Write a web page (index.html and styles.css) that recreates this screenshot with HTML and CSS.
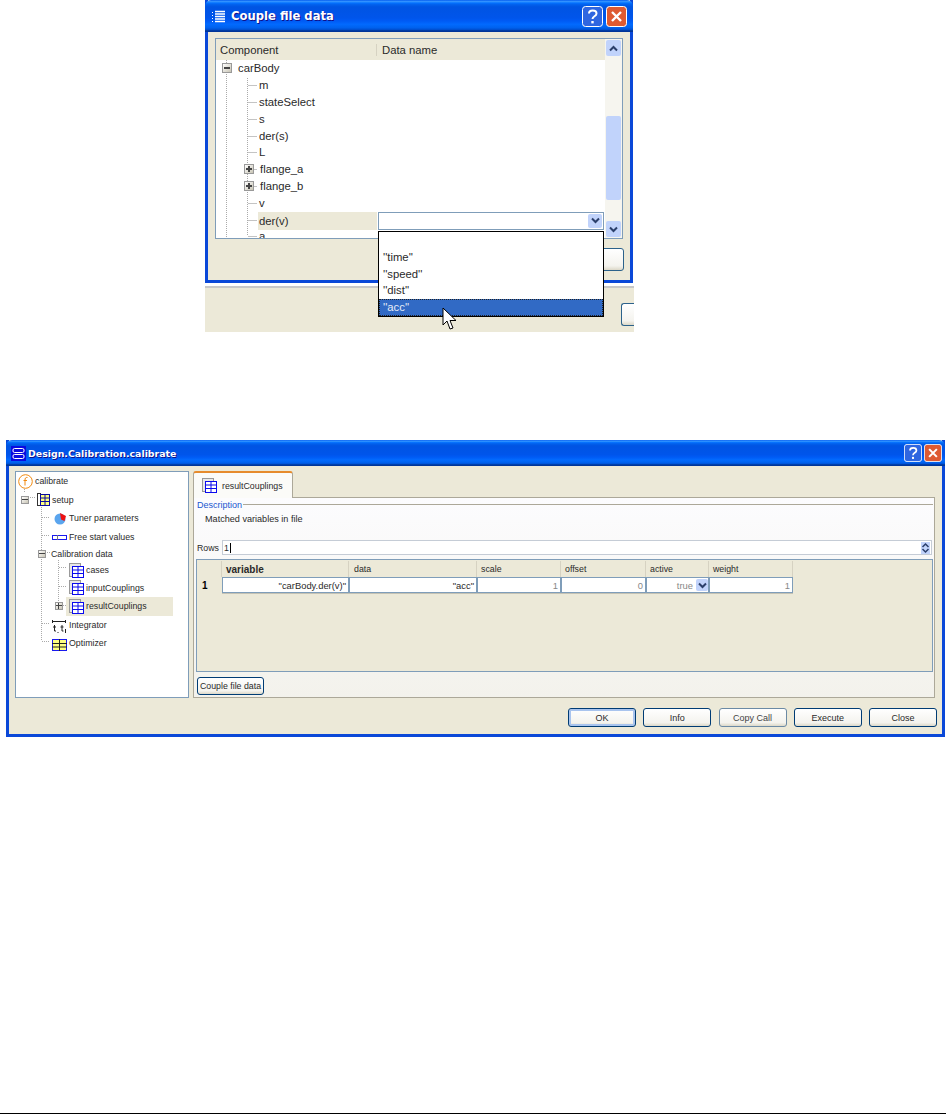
FILE: index.html
```html
<!DOCTYPE html>
<html lang="en">
<head>
    <meta charset="UTF-8">
    <title>Couple file data</title>
    <link rel="stylesheet" href="styles.css">
</head>
<body>
<svg class="defs" width="0" height="0">
    <symbol id="gridIcon" viewBox="0 0 15 15">
        <rect x="0.5" y="0.5" width="11" height="13" fill="#e8e8e8" stroke="#999"/>
        <rect x="3" y="3" width="11.5" height="11.5" fill="#fff"/>
        <path d="M3 3.5H15M3 7H15M3 10.5H15M3 14.5H15M3.5 3V15M9 3V15M14.5 3V15" stroke="#0a0aee" fill="none"/>
    </symbol>
    <symbol id="closeIcon" viewBox="0 0 21 21">
        <rect x="0.5" y="0.5" width="20" height="20" rx="3" fill="#de5a32" stroke="#fff"/>
        <path d="M6 6L15 15M15 6L6 15" stroke="#fff" stroke-width="2.4"/>
    </symbol>
    <symbol id="helpIcon" viewBox="0 0 21 21">
        <rect x="0.5" y="0.5" width="20" height="20" rx="3" fill="#2f66e0" stroke="#fff"/>
        <path d="M7 7.5C7 3.5 14.5 3.5 14.5 7.5C14.5 10.5 10.5 10 10.5 13" stroke="#fff" stroke-width="2" fill="none"/>
        <rect x="9.3" y="15" width="2.4" height="2.4" fill="#fff"/>
    </symbol>
    <symbol id="arrowDown" viewBox="0 0 9 7">
        <path d="M1 1.5L4.5 5L8 1.5" stroke="#2b3f6b" stroke-width="2" fill="none"/>
    </symbol>
</svg>

<!-- Top screenshot -->
<section class="shot">
    <div class="win win-small">
        <div class="titlebar titlebar-small">
            <svg class="title-icon" width="13" height="13" viewBox="0 0 13 13">
                <path d="M0 2.5H1M0 5.5H1M0 8.5H1M0 11.5H1" stroke="#fff"/>
                <path d="M3 1.5H13M3 4H13M3 6.5H13M3 9H13M3 11.5H13" stroke="#fff" stroke-width="1.3"/>
            </svg>
            <span class="title">Couple file data</span>
            <svg class="cap-btn" width="21" height="21"><use href="#helpIcon"/></svg>
            <svg class="cap-btn" width="21" height="21"><use href="#closeIcon"/></svg>
        </div>
        <div class="win-small-body">
            <div class="couple-panel">
                <div class="couple-list">
                    <div class="couple-head">
                        <span class="col-comp">Component</span>
                        <span class="col-data">Data name</span>
                    </div>
                    <svg class="guides" width="60" height="180" viewBox="0 0 60 180">
                        <path d="M10.5 0V180M31.5 18V176" stroke="#aaa" stroke-dasharray="1 1" fill="none"/>
                        <path d="M32 25.5H41M32 42.5H41M32 59.5H41M32 76.5H41M32 92.5H41M37 109.5H41M37 126.5H41M32 143.5H41M32 160.5H41M32 176.5H41" stroke="#c4c4c4" fill="none"/>
                    </svg>
                    <div class="c-row c-root"><span class="exp minus"></span>carBody</div>
                    <div class="c-row">m</div>
                    <div class="c-row">stateSelect</div>
                    <div class="c-row">s</div>
                    <div class="c-row">der(s)</div>
                    <div class="c-row">L</div>
                    <div class="c-row c-node"><span class="exp plus"></span>flange_a</div>
                    <div class="c-row c-node"><span class="exp plus"></span>flange_b</div>
                    <div class="c-row">v</div>
                    <div class="c-row c-selected">
                        <span class="c-sel">der(v)</span>
                        <div class="combo">
                            <span class="combo-btn"><svg width="9" height="7"><use href="#arrowDown"/></svg></span>
                        </div>
                    </div>
                    <div class="c-row">a</div>
                </div>
                <div class="vscroll">
                    <span class="sb-btn"><svg class="flip" width="9" height="7"><use href="#arrowDown"/></svg></span>
                    <span class="sb-thumb"></span>
                    <span class="sb-btn"><svg width="9" height="7"><use href="#arrowDown"/></svg></span>
                </div>
            </div>
            <div class="small-actions"><span class="xp-btn small-action"></span></div>
        </div>
    </div>
    <div class="strip"><span class="xp-btn strip-btn"></span></div>

    <ul class="droplist">
        <li></li>
        <li>''time''</li>
        <li>''speed''</li>
        <li>''dist''</li>
        <li class="picked">''acc''</li>
    </ul>
    <svg class="cursor" width="15" height="24" viewBox="0 0 15 24">
        <path d="M1 1V18L5 14L8 22L11 21L8 13.5H14Z" fill="#fff" stroke="#000"/>
    </svg>
</section>

<!-- Calibrate dialog -->
<section class="win win-large">
    <div class="titlebar titlebar-large">
        <svg class="title-icon" width="15" height="15" viewBox="0 0 15 15">
            <rect width="15" height="15" fill="#0a0ae0"/>
            <rect x="2" y="2.5" width="11" height="4" rx="1.5" fill="none" stroke="#fff"/>
            <rect x="2" y="8.5" width="11" height="4" rx="1.5" fill="none" stroke="#fff"/>
        </svg>
        <span class="title">Design.Calibration.calibrate</span>
        <svg class="cap-btn" width="18" height="18"><use href="#helpIcon"/></svg>
        <svg class="cap-btn" width="18" height="18"><use href="#closeIcon"/></svg>
    </div>
    <div class="dlg-body">
        <div class="dlg-main">
            <div class="tree">
                <svg class="guides" width="70" height="180" viewBox="0 0 70 180">
                    <path d="M8.5 17V21M25.5 33V169M42.5 88V133" stroke="#aaa" stroke-dasharray="1 1" fill="none"/>
                    <path d="M14 25.5H20M26 45.5H34M26 63.5H34M31 80.5H34M43 95.5H50M43 114.5H50M47 133.5H50M26 151.5H34M26 169.5H34" stroke="#aaa" stroke-dasharray="1 1" fill="none"/>
                </svg>
                <div class="t-row t-func">
                    <svg class="ico" width="15" height="15" viewBox="0 0 15 15">
                        <circle cx="7.5" cy="7.5" r="6.8" fill="#fff" stroke="#f08a10"/>
                        <path d="M9.5 3.5C7.5 3 7 4.5 7 6V11.5M5.5 6.5H9" stroke="#f08a10" fill="none"/>
                    </svg>calibrate
                </div>
                <div class="t-row t-setup">
                    <span class="exp exp-sm minus"></span>
                    <svg class="ico" width="13" height="13" viewBox="0 0 13 13">
                        <rect x="0.5" y="0.5" width="3" height="12" fill="none" stroke="#333"/>
                        <rect x="3" y="1" width="9.5" height="11.5" fill="#ffff80"/>
                        <path d="M3 1.5H13M3 5H13M3 8.5H13M3 12.5H13M3.5 1V13M8 1V13M12.5 1V13" stroke="#0a0aa0" fill="none"/>
                    </svg>setup
                </div>
                <div class="t-row t-tuner">
                    <svg class="ico" width="13" height="13" viewBox="0 0 13 13">
                        <circle cx="6" cy="7" r="5.5" fill="#5aa5ee"/>
                        <path d="M6 1L12 4L10.5 9L7 7.5Z" fill="#ee1111"/>
                    </svg>Tuner parameters
                </div>
                <div class="t-row t-free">
                    <svg class="ico" width="15" height="7" viewBox="0 0 15 7">
                        <rect x="0.5" y="1.5" width="14" height="4" fill="#fff" stroke="#1a1aee"/>
                        <path d="M5.5 1V6" stroke="#777"/>
                    </svg>Free start values
                </div>
                <div class="t-row t-calib t-short"><span class="exp exp-sm minus"></span>Calibration data</div>
                <div class="t-row t-item t-short"><svg class="ico" width="15" height="15"><use href="#gridIcon"/></svg>cases</div>
                <div class="t-row t-item"><svg class="ico" width="15" height="15"><use href="#gridIcon"/></svg>inputCouplings</div>
                <div class="t-row t-result">
                    <span class="exp exp-sm plus"></span>
                    <div class="t-sel"><svg class="ico" width="15" height="15"><use href="#gridIcon"/></svg>resultCouplings</div>
                </div>
                <div class="t-row t-free">
                    <svg class="ico ico-low ico-wide" width="14" height="13" viewBox="0 0 14 13">
                        <path d="M0.5 0V3M13.5 0V3M0 1.5H14" stroke="#222" fill="none"/>
                        <path d="M2.5 5V11H4M1 7H4M10 5V11H11.5M8.5 7H11.5M13.5 9V13M6 12V13" stroke="#222" fill="none"/>
                    </svg>Integrator
                </div>
                <div class="t-row t-free">
                    <svg class="ico ico-low" width="15" height="12" viewBox="0 0 15 12">
                        <rect x="0.5" y="0.5" width="14" height="11" fill="#ffff80" stroke="#1a1aee"/>
                        <path d="M0 4.5H15M7.5 0V12" stroke="#222"/>
                        <path d="M0 8H15" stroke="#222"/>
                    </svg>Optimizer
                </div>
            </div>
            <div class="pane">
                <div class="tabs">
                    <div class="tab"><svg class="ico" width="15" height="15"><use href="#gridIcon"/></svg>resultCouplings</div>
                </div>
                <div class="tab-body">
                    <div class="desc">
                        <div class="legend"><span>Description</span><i></i></div>
                        <div class="desc-text">Matched variables in file</div>
                    </div>
                    <div class="rows-line">
                        <label>Rows</label>
                        <div class="rows-input">
                            <span>1</span>
                            <svg class="spin" width="9" height="12" viewBox="0 0 9 12">
                                <rect width="9" height="12" fill="#c1d3fb"/>
                                <path d="M1.5 5L4.5 2L7.5 5M1.5 7L4.5 10L7.5 7" stroke="#2b3f6b" stroke-width="1.5" fill="none"/>
                            </svg>
                        </div>
                    </div>
                    <div class="grid-box">
                        <div class="data-grid">
                            <div class="gh"></div>
                            <div class="gh gh-main">variable</div>
                            <div class="gh gh-data">data</div>
                            <div class="gh">scale</div>
                            <div class="gh">offset</div>
                            <div class="gh">active</div>
                            <div class="gh">weight</div>
                            <div class="g-rowhead">1</div>
                            <div class="cell">"carBody.der(v)"</div>
                            <div class="cell">"acc"</div>
                            <div class="cell cell-off">1</div>
                            <div class="cell cell-off">0</div>
                            <div class="cell cell-off cell-combo">true<span class="combo-btn"><svg width="9" height="7"><use href="#arrowDown"/></svg></span></div>
                            <div class="cell cell-off">1</div>
                        </div>
                    </div>
                    <button class="xp-btn couple-btn">Couple file data</button>
                </div>
            </div>
        </div>
        <div class="dlg-actions">
            <button class="xp-btn act act-default">OK</button>
            <button class="xp-btn act">Info</button>
            <button class="xp-btn act act-off">Copy Call</button>
            <button class="xp-btn act">Execute</button>
            <button class="xp-btn act">Close</button>
        </div>
    </div>
</section>

<footer class="page-rule"></footer>
</body>
</html>
```

FILE: styles.css
```css
html, body {
    margin: 0;
    padding: 0;
}

body {
    display: flex;
    flex-direction: column;
    height: 1114px;
    overflow: hidden;
    background-color: #fff;
    font-family: "Liberation Sans", Arial, sans-serif;
    font-size: 9px;
    color: #2a2a2a;
}

.defs {
    position: absolute;
}

.page-rule {
    margin-top: auto;
    height: 1px;
    background-color: #000;
}

/* Window chrome */
.win {
    box-sizing: border-box;
    background-color: #ece9d8;
    border: 3px solid #0a48d8;
    border-top: none;
}

.titlebar {
    display: flex;
    align-items: center;
    margin: 0 -3px;
    background: linear-gradient(#0058ee, #3593ff 4%, #288eff 6%, #127dff 8%, #036ffc 10%, #0262ee 14%, #0057e5 20%, #0054e3 24%, #0055eb 56%, #005bf5 66%, #026afe 76%, #0062ef 86%, #0052d6 92%, #0040ab 94%, #003092 100%);
    border-radius: 6px 6px 0 0;
}

.title {
    flex: 1;
    font-family: "DejaVu Sans", Verdana, sans-serif;
    font-weight: bold;
    color: #fff;
    text-shadow: 1px 1px #0f1089;
}

.cap-btn {
    display: block;
}

.xp-btn {
    box-sizing: border-box;
    display: block;
    padding: 0;
    background: linear-gradient(#fff, #f4f3ee 80%, #dcd8c8);
    border: 1px solid #003c74;
    border-radius: 3px;
    font-family: inherit;
    font-size: 9px;
    color: #2a2a2a;
}

/* Top screenshot */
.shot {
    position: relative;
    flex: none;
    width: 429px;
    height: 332px;
    margin-left: 205px;
    margin-bottom: 108px;
}

.win-small {
    width: 428px;
    height: 283px;
}

.titlebar-small {
    height: 32px;
    padding: 0 6px 0 7px;
    gap: 3px;
}

.titlebar-small .title {
    padding-left: 3px;
    font-size: 11.6px;
}

.win-small-body {
    padding: 6px 7px 0 7px;
}

.couple-panel {
    display: flex;
    height: 201px;
    box-sizing: border-box;
    background-color: #fff;
    border: 1px solid #7f9db9;
    overflow: hidden;
}

.couple-list {
    position: relative;
    flex: 1;
    font-size: 11.3px;
}

.couple-head {
    display: flex;
    align-items: center;
    height: 21px;
    background-color: #ece9d8;
}

.col-comp {
    box-sizing: border-box;
    width: 161px;
    padding-left: 4px;
    border-right: 1px solid #d6d2c2;
}

.col-data {
    padding-left: 5px;
}

.couple-list .guides {
    position: absolute;
    left: 0;
    top: 21px;
}

.c-row {
    position: relative;
    display: flex;
    align-items: center;
    height: 16.8px;
    padding-left: 43px;
}

.c-root {
    padding-left: 6px;
}

.c-root .exp {
    margin-right: 6px;
}

.c-node {
    padding-left: 28px;
}

.c-node .exp {
    margin-right: 6px;
}

.c-selected {
    padding-left: 42px;
}

.c-sel {
    box-sizing: border-box;
    display: flex;
    align-items: center;
    width: 119px;
    height: 18px;
    margin-top: 2px;
    padding-left: 1px;
    background-color: #ece9d8;
}

.combo {
    box-sizing: border-box;
    display: flex;
    align-items: center;
    justify-content: flex-end;
    width: 226px;
    height: 18px;
    margin-top: 2px;
    margin-left: 1px;
    padding-right: 1px;
    background-color: #fff;
    border: 1px solid #7f9db9;
}

.combo-btn {
    display: flex;
    align-items: center;
    justify-content: center;
    width: 14px;
    height: 14px;
    background-color: #c1d3fb;
    border-radius: 2px;
}

.exp {
    box-sizing: border-box;
    position: relative;
    flex: none;
    width: 10px;
    height: 10px;
    background: linear-gradient(135deg, #fff, #c8c4b4);
    border: 1px solid #999;
}

.exp::before {
    content: "";
    position: absolute;
    left: 1px;
    right: 1px;
    top: 3px;
    height: 2px;
    background-color: #444;
}

.plus::after {
    content: "";
    position: absolute;
    top: 1px;
    bottom: 1px;
    left: 3px;
    width: 2px;
    background-color: #444;
}

.exp-sm {
    width: 8px;
    height: 8px;
}

.exp-sm::before {
    top: 2px;
    height: 1px;
    left: 0;
    right: 0;
}

.exp-sm.plus::after {
    top: 0;
    bottom: 0;
    left: 2px;
    width: 1px;
}

.vscroll {
    display: flex;
    flex-direction: column;
    justify-content: space-between;
    flex: none;
    width: 17px;
    padding: 1px 1px 1px 1px;
    box-sizing: border-box;
    background-color: #f6f5ef;
    position: relative;
}

.sb-btn {
    display: flex;
    align-items: center;
    justify-content: center;
    height: 16px;
    background-color: #c1d3fb;
    border-radius: 2px;
}

.flip {
    transform: scaleY(-1);
}

.sb-thumb {
    position: absolute;
    left: 1px;
    right: 1px;
    top: 77px;
    height: 84px;
    background-color: #c1d3fb;
    border-radius: 2px;
}

.small-actions {
    display: flex;
    justify-content: flex-end;
    padding-top: 9px;
}

.small-action {
    width: 24px;
    height: 23px;
    border-color: #2c628b;
    margin-right: -1px;
}

.strip {
    display: flex;
    justify-content: flex-end;
    box-sizing: border-box;
    height: 46px;
    margin-top: 3px;
    padding-top: 15px;
    background-color: #ece9d8;
    border-top: 2px solid #c8c8c8;
    overflow: hidden;
}

.strip-btn {
    width: 13px;
    height: 23px;
    border-right: none;
    border-radius: 3px 0 0 3px;
    border-color: #2c628b;
}

.droplist {
    position: absolute;
    left: 173px;
    top: 231px;
    box-sizing: border-box;
    width: 226px;
    height: 86px;
    margin: 0;
    padding: 0;
    list-style: none;
    background-color: #fff;
    border: 1px solid #000;
    font-size: 11.3px;
}

.droplist li {
    box-sizing: border-box;
    height: 16.8px;
    line-height: 16.8px;
    padding-left: 4px;
}

.droplist .picked {
    background-color: #316ac5;
    color: #e6edf8;
    outline: 1px dotted #222;
    outline-offset: -1px;
}

.cursor {
    position: absolute;
    left: 237px;
    top: 307px;
}

/* Calibrate dialog */
.win-large {
    flex: none;
    width: 939px;
    height: 297px;
    margin-left: 6px;
}

.titlebar-large {
    height: 26px;
    padding: 0 3px 0 5px;
    gap: 2px;
}

.titlebar-large .title {
    font-size: 9.4px;
}

.dlg-body {
    padding: 5px 7px 0 6px;
}

.dlg-main {
    display: flex;
    gap: 4px;
    height: 227px;
}

.tree {
    position: relative;
    box-sizing: border-box;
    flex: none;
    width: 174px;
    background-color: #fff;
    border: 1px solid #7f9db9;
}

.tree .guides {
    position: absolute;
    left: 0;
    top: 0;
}

.t-row {
    position: relative;
    display: flex;
    align-items: center;
    height: 18.6px;
    font-size: 8.8px;
}

.t-short {
    height: 16px;
}

.ico {
    flex: none;
    margin-right: 2px;
}

.ico-low {
    margin-top: 4px;
}

.ico-wide {
    margin-right: 3px;
}

.t-func {
    padding-left: 2px;
}

.t-setup {
    padding-left: 5px;
}

.t-setup .exp {
    margin-right: 8px;
}

.t-tuner {
    padding-left: 38px;
}

.t-free {
    padding-left: 36px;
}

.t-calib {
    padding-left: 22px;
}

.t-calib .exp {
    margin-right: 5px;
}

.t-item {
    padding-left: 53px;
}

.t-result {
    padding-left: 39px;
}

.t-result .exp {
    margin-right: 3px;
}

.t-sel {
    box-sizing: border-box;
    display: flex;
    align-items: center;
    width: 107px;
    height: 19px;
    padding-left: 3px;
    background-color: #ece9d8;
}

.pane {
    display: flex;
    flex-direction: column;
    flex: 1;
    min-width: 0;
    height: 227px;
}

.tabs {
    display: flex;
    height: 26px;
}

.tab {
    box-sizing: border-box;
    display: flex;
    align-items: center;
    width: 100px;
    height: 27px;
    padding-left: 8px;
    background-color: #fbfbf8;
    border: 1px solid #aca899;
    border-top: 2px solid #e68b2c;
    border-bottom: none;
    border-radius: 3px 3px 0 0;
    position: relative;
    font-size: 8.8px;
}

.tab .ico {
    margin-right: 5px;
}

.tab-body {
    box-sizing: border-box;
    flex: 1;
    padding: 0 1px 0 2px;
    background: linear-gradient(#fcfcfe, #f3f2ec);
    border: 1px solid #aca899;
    font-size: 8.8px;
}

.desc {
    height: 42px;
}

.legend {
    display: flex;
    align-items: center;
    height: 13px;
    padding-left: 1px;
    font-size: 9px;
    color: #1a56d0;
}

.legend i {
    flex: 1;
    margin-left: 1px;
    height: 1px;
    background-color: #aca899;
}

.desc-text {
    padding: 3px 0 0 9px;
    font-size: 9.1px;
}

.rows-line {
    display: flex;
    align-items: center;
    height: 15px;
    margin-bottom: 4px;
}

.rows-line label {
    width: 26px;
    padding-left: 1px;
    box-sizing: border-box;
}

.rows-input {
    flex: 1;
    display: flex;
    align-items: center;
    justify-content: space-between;
    box-sizing: border-box;
    height: 15px;
    margin-right: 1px;
    padding: 0 1px 0 1px;
    background-color: #fff;
    border: 1px solid #c5ccd6;
}

.rows-input span {
    padding-right: 1px;
    border-right: 1px solid #000;
}

.spin {
    display: block;
}

.grid-box {
    box-sizing: border-box;
    height: 113px;
    background-color: #ece9d8;
    border: 1px solid #7f9db9;
    padding-top: 1px;
}

.data-grid {
    display: grid;
    grid-template-columns: 25px 127px 128px 84px 85px 63px 84px;
    grid-template-rows: 16px 16px;
    width: 596px;
}

.gh {
    box-sizing: border-box;
    display: flex;
    align-items: center;
    padding-left: 4px;
    border-right: 1px solid #d6d2c2;
}

.gh-main {
    font-size: 10px;
    font-weight: bold;
}

.gh-data {
    padding-left: 5px;
}

.g-rowhead {
    display: flex;
    align-items: center;
    padding-left: 5px;
    font-weight: bold;
    font-size: 10px;
    color: #000;
}

.cell {
    box-sizing: border-box;
    display: flex;
    align-items: center;
    justify-content: flex-end;
    padding-right: 2px;
    background-color: #fff;
    border: 1px solid #7f9db9;
    box-shadow: 0 1px #c4c2b4;
    font-size: 9.4px;
}

.cell-off {
    color: #888;
}

.cell-combo {
    padding-right: 0;
    gap: 3px;
}

.cell-combo .combo-btn {
    width: 12px;
    height: 12px;
}

.couple-btn {
    width: 67px;
    height: 18px;
    margin: 5px 0 0 1px;
    font-size: 8.8px;
}

.dlg-actions {
    display: flex;
    justify-content: flex-end;
    gap: 7.25px;
    margin-right: -2px;
    padding-top: 10px;
}

.act {
    width: 68px;
    height: 19px;
}

.act-default {
    box-shadow: inset 0 0 0 2px #a9c4ee;
}

.act-off {
    border-color: #6b8aa5;
    color: #444;
}
```
